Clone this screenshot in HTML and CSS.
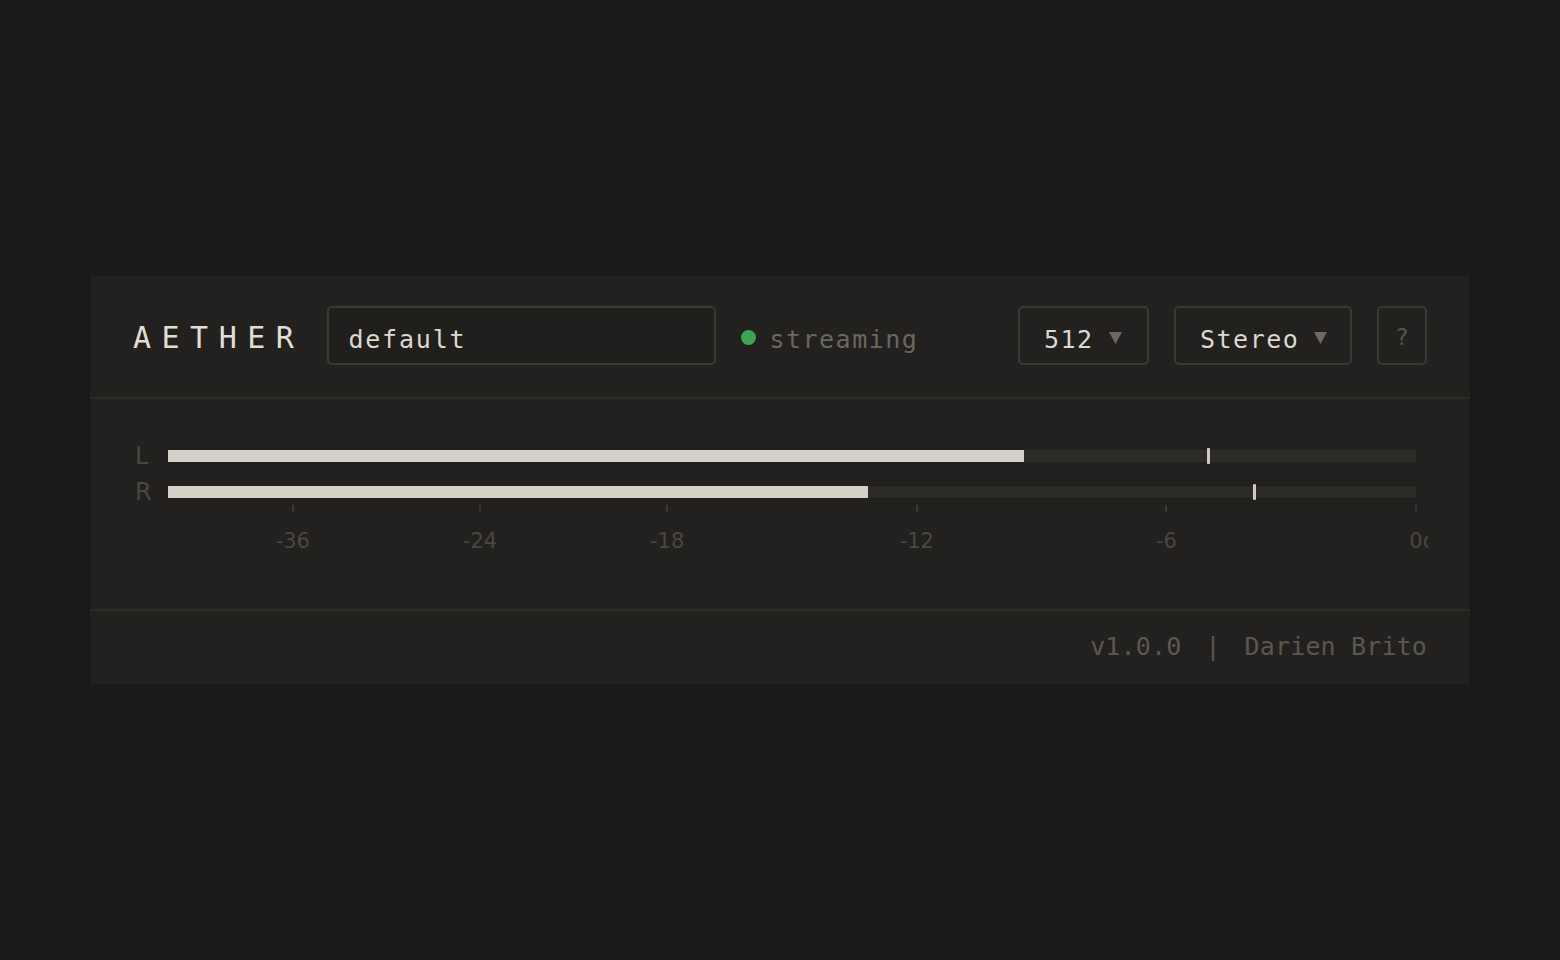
FILE: index.html
```html
<!DOCTYPE html>
<html lang="en">
<head>
<meta charset="utf-8">
<title>Aether</title>
<link rel="stylesheet" href="styles.css">
</head>
<body>
<div class="panel">
  <header class="header">
    <div class="brand">AETHER</div>
    <div class="device-input">default</div>
    <div class="status"><span class="dot"></span><span class="status-text">streaming</span></div>
    <div class="spacer"></div>
    <div class="select select-buffer"><span class="select-value">512</span><svg class="caret" width="13" height="12" viewBox="0 0 13 12"><polygon points="0,0 13,0 6.5,12"/></svg></div>
    <div class="select select-channels"><span class="select-value">Stereo</span><svg class="caret" width="13" height="12" viewBox="0 0 13 12"><polygon points="0,0 13,0 6.5,12"/></svg></div>
    <div class="help">?</div>
  </header>
  <section class="meters">
    <div class="meter-row">
      <span class="channel">L</span>
      <div class="track">
        <div class="fill" style="width:68.59%"></div>
        <div class="peak" style="left:83.41%"></div>
      </div>
    </div>
    <div class="meter-row">
      <span class="channel">R</span>
      <div class="track">
        <div class="fill" style="width:56.09%"></div>
        <div class="peak" style="left:87.06%"></div>
      </div>
    </div>
    <div class="scale">
      <div class="scale-inner">
        <div class="tick" style="left:10%"></div>
        <div class="tick-label" style="left:10%">-36</div>
        <div class="tick" style="left:25%"></div>
        <div class="tick-label" style="left:25%">-24</div>
        <div class="tick" style="left:40%"></div>
        <div class="tick-label" style="left:40%">-18</div>
        <div class="tick" style="left:60%"></div>
        <div class="tick-label" style="left:60%">-12</div>
        <div class="tick" style="left:80%"></div>
        <div class="tick-label" style="left:80%">-6</div>
        <div class="tick" style="left:100%"></div>
        <div class="tick-label" style="left:100%">0<span class="unit">dB</span></div>
      </div>
    </div>
  </section>
  <footer class="footer">
    <span class="version">v1.0.0</span>
    <span class="sep">|</span>
    <span class="author">Darien Brito</span>
  </footer>
</div>
</body>
</html>
```

FILE: styles.css
```css
* { box-sizing: border-box; }

html, body {
  margin: 0;
  padding: 0;
  background: #1b1a18;
}

body {
  width: 1560px;
  height: 960px;
  overflow: hidden;
  font-family: "DejaVu Sans Mono", "Liberation Mono", monospace;
  color: #dcd8d0;
}

.panel {
  width: 1380px;
  margin: 276px 0 0 90px;
  background: #222120;
}

/* header */
.header {
  display: flex;
  align-items: stretch;
  height: 123px;
  padding: 30px 43px 32px 43px;
  border-bottom: 2px solid #2d2c29;
}

.brand {
  display: flex;
  align-items: center;
  padding-top: 4px;
  font-size: 30px;
  letter-spacing: 10.5px;
  color: #e2ded6;
  margin-right: 23px;
}

.device-input {
  width: 389px;
  height: 59px;
  display: flex;
  align-items: center;
  padding: 8px 0 0 19px;
  border: 2px solid #3a3936;
  border-radius: 5px;
  background: #201f1d;
  font-size: 25px;
  letter-spacing: 1.8px;
  color: #dcd8d0;
  margin-right: 25px;
}

.status {
  display: flex;
  align-items: center;
  padding-top: 8px;
}

.dot {
  width: 15px;
  height: 15px;
  border-radius: 50%;
  background: #3ea452;
  margin-right: 13px;
  margin-bottom: 4px;
}

.status-text {
  font-size: 25px;
  letter-spacing: 1.5px;
  color: #6b675f;
}

.spacer { flex: 1; }

.select {
  height: 59px;
  display: flex;
  align-items: center;
  padding: 8px 0 0 24px;
  border: 2px solid #3a3936;
  border-radius: 5px;
  margin-right: 25px;
}

.select-buffer { width: 131px; }
.select-channels { width: 178px; }

.select-value {
  font-size: 25px;
  letter-spacing: 1.5px;
  color: #dcd8d0;
  margin-right: 15px;
}

.caret {
  fill: #6e6a62;
  margin-bottom: 3px;
}

.help {
  width: 50px;
  height: 59px;
  display: flex;
  align-items: center;
  justify-content: center;
  padding-top: 3px;
  border: 2px solid #3a3936;
  border-radius: 5px;
  font-size: 23px;
  color: #55524c;
}

/* meters */
.meters {
  padding: 45px 43px 57px 43px;
  border-bottom: 2px solid #2d2c29;
  display: flex;
  flex-direction: column;
  gap: 12px;
}

.meter-row {
  display: flex;
  align-items: center;
  height: 24px;
}

.channel {
  width: 35px;
  padding-left: 2px;
  font-family: "DejaVu Sans", "Noto Sans", sans-serif;
  font-size: 24px;
  line-height: 24px;
  color: #4a4743;
}

.track {
  position: relative;
  width: 1248px;
  height: 12px;
  background: #2c2b28;
}

.fill {
  height: 100%;
  background: #d5d1c9;
}

.peak {
  position: absolute;
  top: -2px;
  width: 3px;
  height: 16px;
  margin-left: -1.5px;
  background: #cfcbc3;
  border-radius: 1px;
}

.scale {
  margin-top: -12px;
  margin-left: 35px;
  width: 1260px;
  height: 48px;
  overflow: hidden;
}

.scale-inner {
  position: relative;
  width: 1248px;
  height: 48px;
}

.tick {
  position: absolute;
  top: 1px;
  width: 2px;
  height: 7px;
  margin-left: -1px;
  background: #3a3835;
}

.tick-label {
  position: absolute;
  top: 25px;
  transform: translateX(-50%);
  font-family: "DejaVu Sans", "Noto Sans", sans-serif;
  font-size: 21px;
  line-height: 24px;
  color: #4a4742;
  white-space: nowrap;
}

.unit {
  position: absolute;
  left: 100%;
  top: 0;
}

/* footer */
.footer {
  height: 73px;
  display: flex;
  align-items: center;
  justify-content: flex-end;
  gap: 24px;
  padding-right: 43px;
  padding-bottom: 2px;
  font-size: 25px;
  letter-spacing: 0.15px;
  color: #5b5750;
}
```
